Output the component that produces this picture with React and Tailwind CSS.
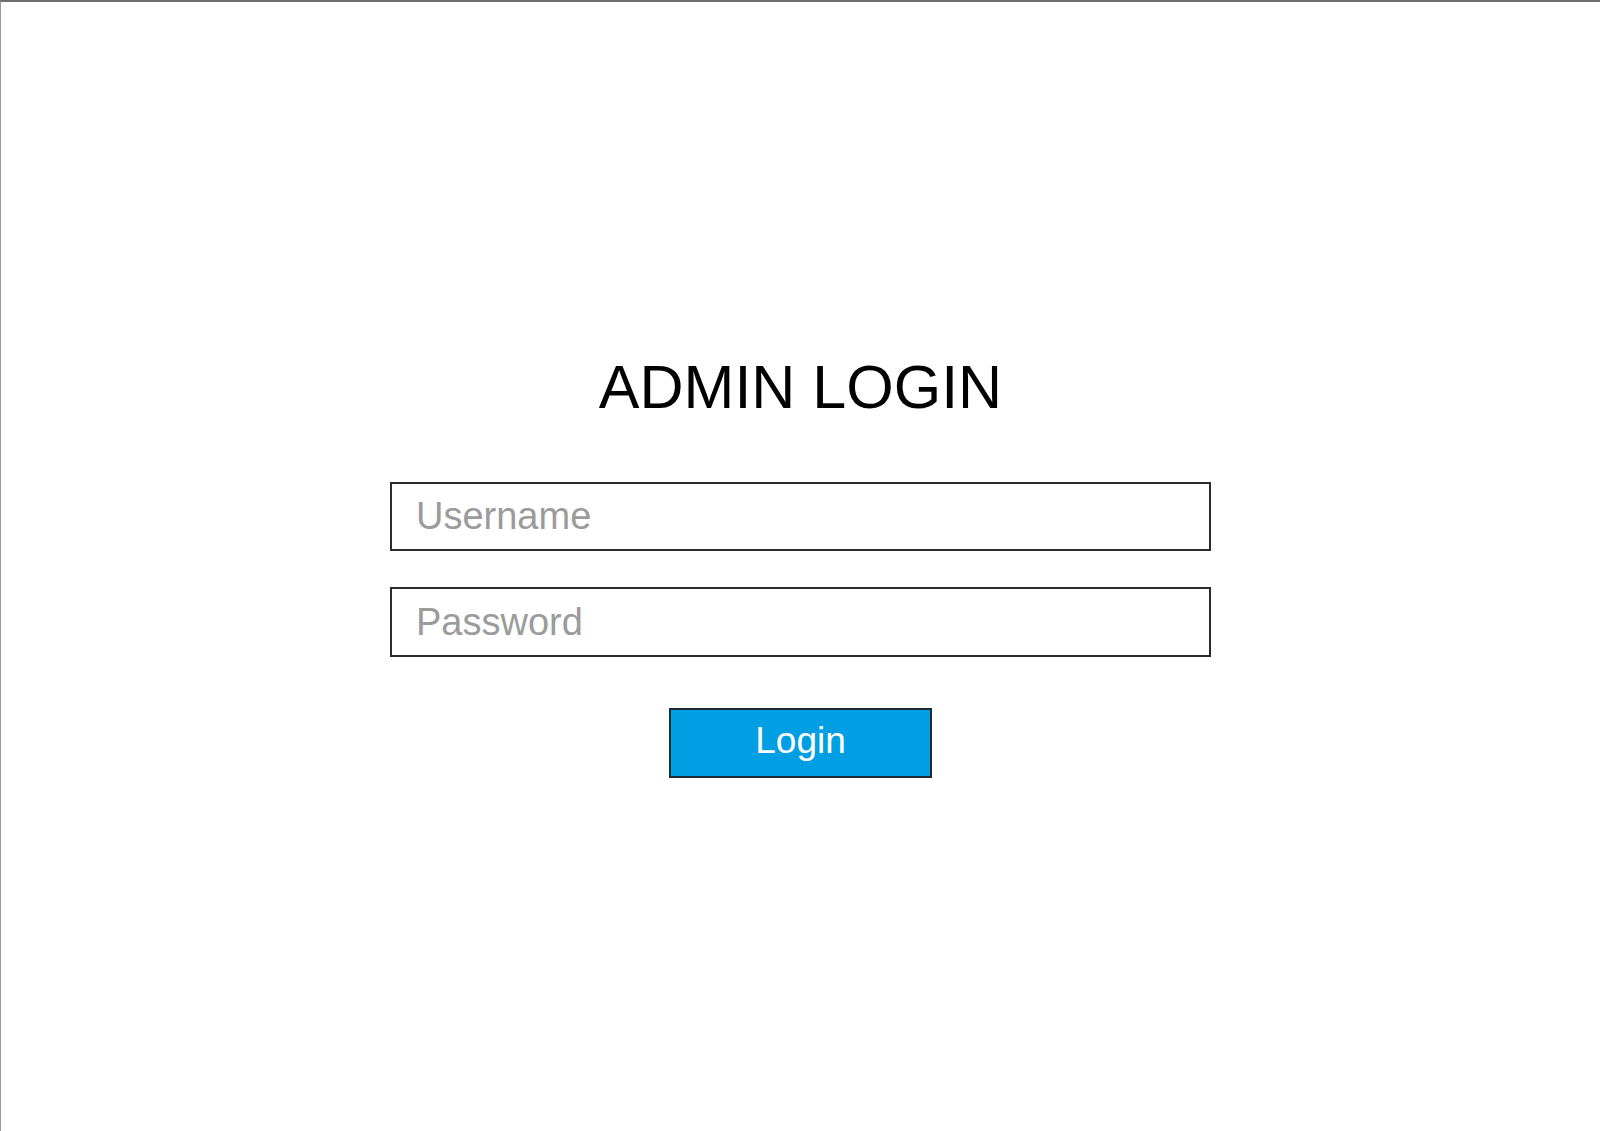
import React from "react";

export default function App() {
  return (
    <div className="h-[1131px] w-full border-t-2 border-l border-t-[#6e6e6e] border-l-[#9a9a9a] bg-white font-['Liberation_Sans',Arial,sans-serif]">
      <div className="flex flex-col items-center pt-[355px]">
        <h1 className="text-[61px] leading-none text-black">ADMIN LOGIN</h1>

        <form
          className="mt-[64px] flex w-[821px] flex-col gap-[36px]"
          onSubmit={(e) => e.preventDefault()}
        >
          <input
            type="text"
            placeholder="Username"
            className="h-[69px] w-full border-2 border-[#2b2b2b] bg-white px-6 text-[38px] text-black outline-none placeholder:text-[#9b9b9b]"
          />
          <input
            type="password"
            placeholder="Password"
            className="h-[70px] w-full border-2 border-[#2b2b2b] bg-white px-6 text-[38px] text-black outline-none placeholder:text-[#9b9b9b]"
          />
          <div className="mt-[15px] flex justify-center">
            <button
              type="submit"
              className="flex h-[70px] w-[263px] items-center justify-center border-2 border-[#1e2a33] bg-[#009fe3] pb-1 text-[37px] text-white"
            >
              Login
            </button>
          </div>
        </form>
      </div>
    </div>
  );
}
